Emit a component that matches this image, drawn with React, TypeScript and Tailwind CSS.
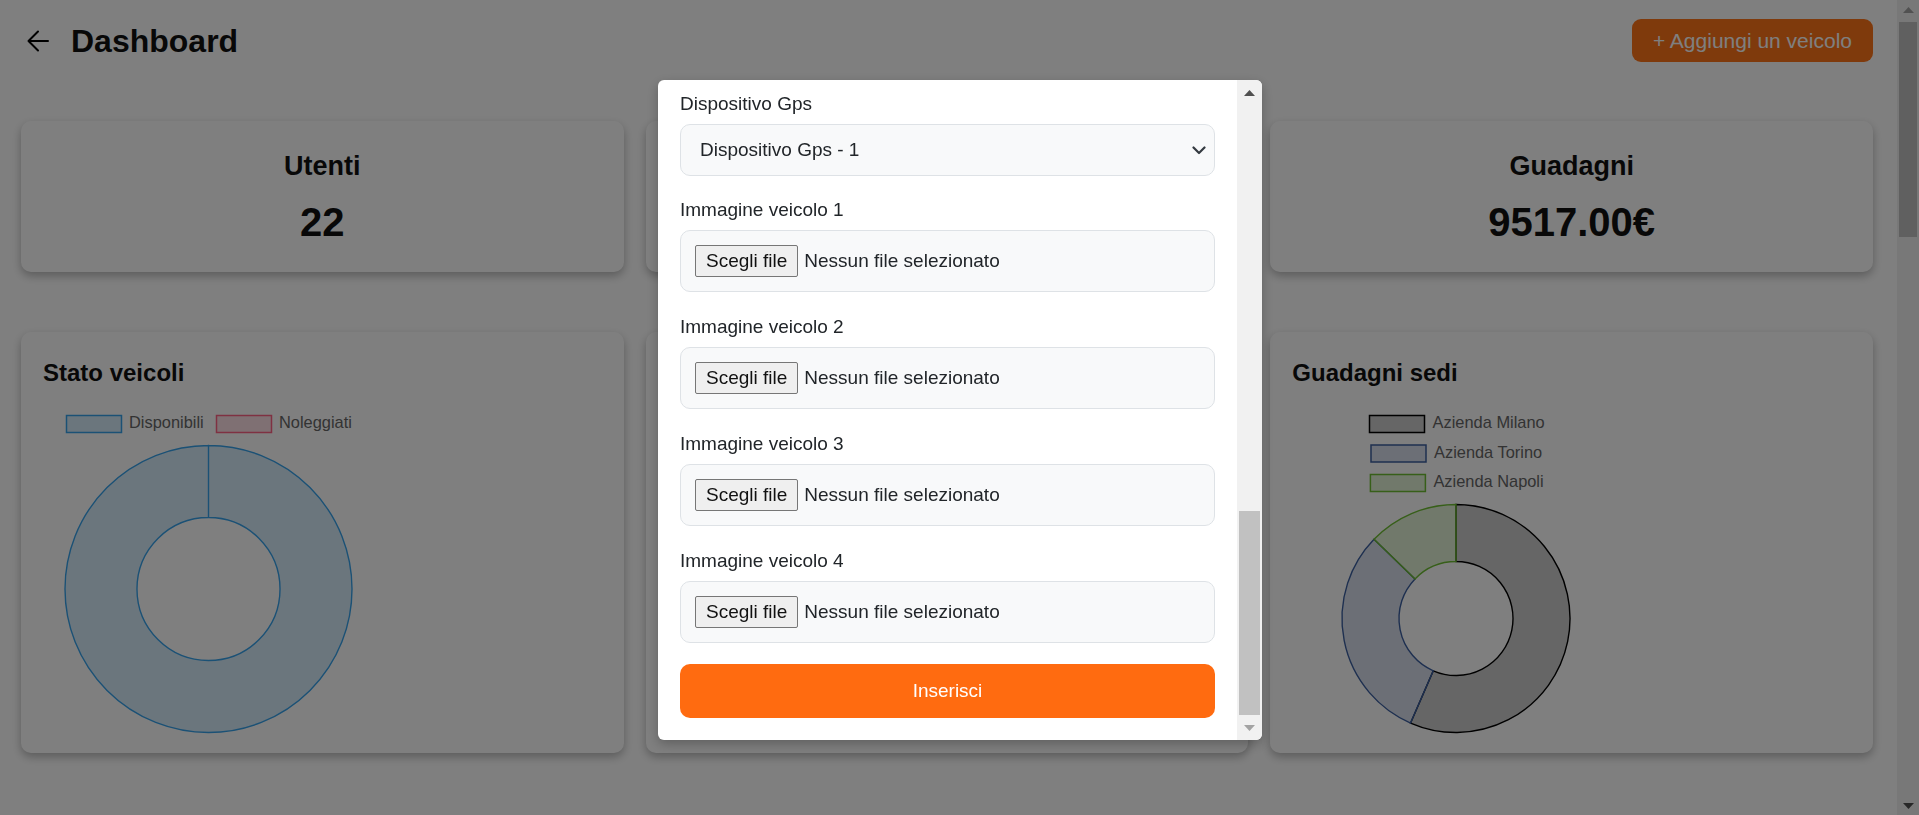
import React from "react";

const pt = (cx: number, cy: number, r: number, deg: number) => {
  const a = (deg * Math.PI) / 180;
  return `${(cx + r * Math.sin(a)).toFixed(2)} ${(cy - r * Math.cos(a)).toFixed(2)}`;
};

const sector = (cx: number, cy: number, R: number, r: number, from: number, to: number) => {
  const large = to - from > 180 ? 1 : 0;
  return `M ${pt(cx, cy, R, from)} A ${R} ${R} 0 ${large} 1 ${pt(cx, cy, R, to)} L ${pt(cx, cy, r, to)} A ${r} ${r} 0 ${large} 0 ${pt(cx, cy, r, from)} Z`;
};

const ring = (cx: number, cy: number, R: number, r: number) =>
  `M ${cx} ${cy - R} A ${R} ${R} 0 1 1 ${cx} ${cy + R} A ${R} ${R} 0 1 1 ${cx} ${cy - R} L ${cx} ${cy - r} A ${r} ${r} 0 1 0 ${cx} ${cy + r} A ${r} ${r} 0 1 0 ${cx} ${cy - r} Z`;

const legendText = {
  fontFamily: "'Liberation Sans', Arial, sans-serif",
  fontSize: 16.4,
  fill: "#666",
};

const StatCard = ({ title, value }: { title?: string; value?: string }) => (
  <div className="flex h-[151px] flex-col items-center rounded-[10px] bg-white pt-[29px] shadow-[0_4px_10px_rgba(0,0,0,0.28)]">
    {title && <h3 className="text-[27px] font-bold leading-[32px] text-[#111]">{title}</h3>}
    {value && <p className="mt-[16px] text-[40px] font-bold leading-[48px] text-[#111]">{value}</p>}
  </div>
);

const ChartCard = ({ title, children }: { title?: string; children?: React.ReactNode }) => (
  <div className="h-[421px] rounded-[10px] bg-white px-[22px] pt-[26px] shadow-[0_4px_10px_rgba(0,0,0,0.28)]">
    {title && <h4 className="text-[24px] font-bold leading-[29px] text-[#111]">{title}</h4>}
    <div className="mt-[13px]">{children}</div>
  </div>
);

const StatoVeicoliChart = () => (
  <svg width="331" height="340" viewBox="0 0 331 340">
    <rect x="23.5" y="15.5" width="55" height="17" fill="rgba(54,162,235,0.2)" stroke="rgb(54,162,235)" strokeWidth="1.5" />
    <text x="86" y="28" style={legendText}>Disponibili</text>
    <rect x="173.5" y="15.5" width="55" height="17" fill="rgba(255,99,132,0.2)" stroke="rgb(255,99,132)" strokeWidth="1.5" />
    <text x="236" y="28" style={legendText}>Noleggiati</text>
    <path d={ring(165.5, 189, 143.5, 71.5)} fill="rgba(54,162,235,0.2)" stroke="rgb(54,162,235)" strokeWidth="1.4" />
  </svg>
);

const sedi = [
  { name: "Azienda Milano", from: 0, to: 203.5, fill: "rgba(0,0,0,0.2)", stroke: "#000", box: 77.5, text: 140.6, y: 15.5 },
  { name: "Azienda Torino", from: 203.5, to: 314, fill: "rgba(60,95,160,0.2)", stroke: "rgb(60,95,160)", box: 79, text: 142, y: 45 },
  { name: "Azienda Napoli", from: 314, to: 360, fill: "rgba(110,190,50,0.2)", stroke: "rgb(110,190,50)", box: 78.4, text: 141.4, y: 74.5 },
];

const GuadagniSediChart = () => (
  <svg width="331" height="340" viewBox="0 0 331 340">
    {sedi.map((s) => (
      <g key={s.name}>
        <rect x={s.box} y={s.y} width="55" height="17" fill={s.fill} stroke={s.stroke} strokeWidth="1.5" />
        <text x={s.text} y={s.y + 12.5} style={legendText}>{s.name}</text>
      </g>
    ))}
    {sedi.map((s) => (
      <path key={s.name} d={sector(164, 218.5, 114, 57, s.from, s.to)} fill={s.fill} stroke={s.stroke} strokeWidth="1.4" />
    ))}
  </svg>
);

const Triangle = ({ up, color }: { up?: boolean; color: string }) => (
  <svg width="11" height="6" viewBox="0 0 11 6">
    <polygon points={up ? "0,6 11,6 5.5,0" : "0,0 11,0 5.5,6"} fill={color} />
  </svg>
);

const FileField = ({ label }: { label: string }) => (
  <div className="mb-[21.5px]">
    <label className="mb-[6px] block leading-[28px]">{label}</label>
    <div className="flex h-[61.5px] items-center gap-[6px] rounded-[10px] border border-[#dee2e6] bg-[#f8f9fa] pl-[14px]">
      <span className="flex h-[32px] items-center rounded-[2px] border border-[#767676] bg-[#efefef] px-[10px] text-[#111]">
        Scegli file
      </span>
      <span>Nessun file selezionato</span>
    </div>
  </div>
);

export default function App() {
  return (
    <div className="relative flex h-[815px] overflow-hidden bg-white font-['Liberation_Sans',Arial,sans-serif]">
      <main className="flex-1 pl-[21px] pr-[24px] pt-[19px]">
        <header className="flex h-[43px] items-center justify-between pl-[6px]">
          <div className="flex items-center gap-[22px]">
            <svg width="22" height="22" viewBox="0 0 22 22" fill="none" stroke="#000" strokeWidth="2" strokeLinecap="round" strokeLinejoin="round">
              <path d="M21 11H1.5M11 1.5 1.5 11 11 20.5" />
            </svg>
            <h1 className="text-[32px] font-bold leading-[38px] text-[#111]">Dashboard</h1>
          </div>
          <button className="flex h-[43px] items-center rounded-[9px] bg-[#fe7418] px-[21px] text-[21px] text-white">
            + Aggiungi un veicolo
          </button>
        </header>

        <section className="mt-[59px] grid grid-cols-3 gap-[22px]">
          <StatCard title="Utenti" value="22" />
          <StatCard />
          <StatCard title="Guadagni" value="9517.00€" />
        </section>

        <section className="mt-[60px] grid grid-cols-3 gap-[22px]">
          <ChartCard title="Stato veicoli">
            <StatoVeicoliChart />
          </ChartCard>
          <ChartCard />
          <ChartCard title="Guadagni sedi">
            <GuadagniSediChart />
          </ChartCard>
        </section>
      </main>

      <aside className="flex w-[22px] flex-col bg-[#f1f1f1]">
        <div className="flex h-[20px] items-center justify-center">
          <Triangle up color="#a3a3a3" />
        </div>
        <div className="mx-[2px] mt-[2px] h-[215px] bg-[#c1c1c1]" />
        <div className="flex-1" />
        <div className="flex h-[18px] items-center justify-center">
          <Triangle color="#505050" />
        </div>
      </aside>

      <div className="fixed inset-0 bg-black/50" />

      <div className="fixed left-[658px] top-[80px] flex h-[660px] w-[604px] overflow-hidden rounded-[6px] bg-white text-[19px] text-[#212529] shadow-[0_4px_12px_rgba(0,0,0,0.25)]">
        <div className="flex-1 px-[22px] pt-[10px]">
          <div className="mb-[20px]">
            <label className="mb-[6px] block leading-[28px]">Dispositivo Gps</label>
            <div className="flex h-[52px] items-center justify-between rounded-[10px] border border-[#dee2e6] bg-[#f8f9fa] pl-[19px] pr-[8px]">
              <span>Dispositivo Gps - 1</span>
              <svg width="14" height="10" viewBox="0 0 14 10" fill="none" stroke="#343a40" strokeWidth="2.2" strokeLinecap="round" strokeLinejoin="round">
                <path d="M1.5 2.5 7 8l5.5-5.5" />
              </svg>
            </div>
          </div>
          <FileField label="Immagine veicolo 1" />
          <FileField label="Immagine veicolo 2" />
          <FileField label="Immagine veicolo 3" />
          <FileField label="Immagine veicolo 4" />
          <button className="flex h-[54px] w-full items-center justify-center rounded-[10px] bg-[#ff6b10] text-white">
            Inserisci
          </button>
        </div>
        <div className="flex w-[25px] flex-col bg-[#f1f1f1]">
          <div className="flex h-[25px] items-center justify-center">
            <Triangle up color="#505050" />
          </div>
          <div className="flex flex-1 flex-col justify-end">
            <div className="mx-[2px] h-[204px] bg-[#c1c1c1]" />
          </div>
          <div className="flex h-[25px] items-center justify-center">
            <Triangle color="#a3a3a3" />
          </div>
        </div>
      </div>
    </div>
  );
}
